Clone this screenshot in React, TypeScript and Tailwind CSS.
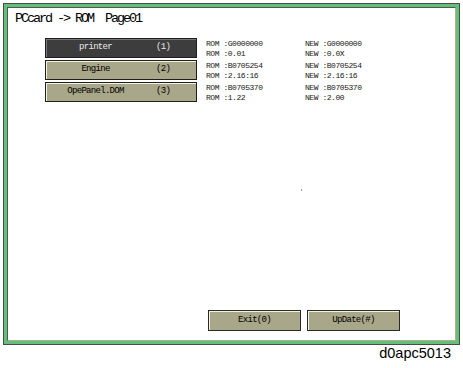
const rows = [
  { name: 'printer', key: '(1)', rom: ['G0000000', '0.01'], next: ['G0000000', '0.0X'], active: true },
  { name: 'Engine', key: '(2)', rom: ['B0705254', '2.16:16'], next: ['B0705254', '2.16:16'], active: false },
  { name: 'OpePanel.DOM', key: '(3)', rom: ['B0705370', '1.22'], next: ['B0705370', '2.00'], active: false },
];

const mono = "font-['Liberation_Mono','DejaVu_Sans_Mono',monospace]";

export default function App() {
  return (
    <div className="w-[463px] h-[368px] bg-white relative overflow-hidden">
      {/* 外框 */}
      <div className="ml-[3px] mt-[3px] w-[457px] h-[342px] border border-[#4a4a4a]">
        <div className="w-full h-full border-[3px] border-[#62c07a]">
          <div className="w-full h-full border border-t-[#555] border-l-[#555] border-b-[#b3ad8c] border-r-[#b3ad8c] bg-white flex flex-col relative">
            <div className={`${mono} text-[13.5px] leading-[16px] tracking-[-2.1px] text-black pl-[7px] pt-[3px] h-[30px]`}>
              PCcard -&gt; ROM&nbsp; Page01
            </div>

            {/* 列表 */}
            <div className="flex flex-col gap-[1px]">
              {rows.map((r) => (
                <div key={r.name} className="flex items-start h-[21px]">
                  <div
                    className={`ml-[37px] w-[152px] h-[20px] border border-[#1e1e1e] flex items-center ${mono} text-[9px] tracking-[-0.7px] ${
                      r.active
                        ? 'bg-[#3d3d3d] text-[#e8e8e8] shadow-[inset_1px_1px_0_#777]'
                        : 'bg-[#a9a789] text-black shadow-[inset_1px_1px_0_#f4f2e0]'
                    }`}
                  >
                    <span className="w-[99px] text-center">{r.name}</span>
                    <span className="ml-[11px]">{r.key}</span>
                  </div>
                  <div className={`${mono} text-[8px] leading-[9.5px] tracking-[-0.45px] text-[#1a1a1a] flex mt-[1px]`}>
                    <div className="ml-[9px] w-[99px]">
                      <div>ROM :{r.rom[0]}</div>
                      <div>ROM :{r.rom[1]}</div>
                    </div>
                    <div>
                      <div>NEW :{r.next[0]}</div>
                      <div>NEW :{r.next[1]}</div>
                    </div>
                  </div>
                </div>
              ))}
            </div>

            <div className="flex-1" />

            {/* 底部按钮 */}
            <div className="flex gap-[6px] pl-[200px] pb-[9px]">
              {['Exit(0)', 'UpDate(#)'].map((t) => (
                <div
                  key={t}
                  className={`w-[93px] h-[21px] border border-[#2a2a2a] bg-[#a9a789] shadow-[inset_1px_1px_0_#f4f2e0] flex items-center justify-center ${mono} text-[9px] tracking-[-0.7px] text-black`}
                >
                  {t}
                </div>
              ))}
            </div>

            <div className="absolute left-[293px] top-[181px] w-[1px] h-[2px] bg-[#999]" />
          </div>
        </div>
      </div>

      <div className="text-right pr-[12px] font-['Liberation_Sans',Arial,sans-serif] text-[14.5px] leading-[16px] text-black">
        d0apc5013
      </div>
    </div>
  );
}
